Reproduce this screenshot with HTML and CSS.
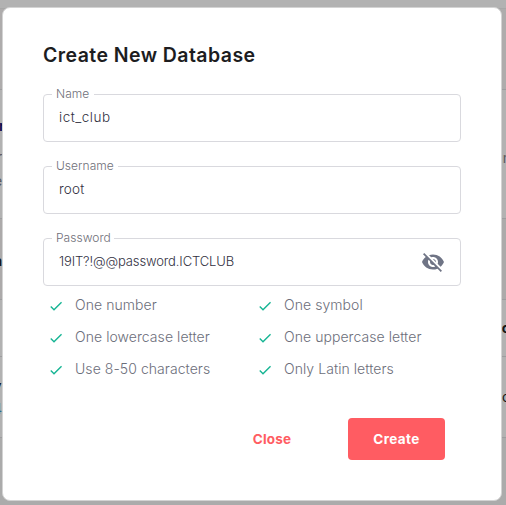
FILE: index.html
```
<!DOCTYPE html>
<html lang="en">
<head>
<meta charset="utf-8">
<title>Create New Database</title>
<link rel="stylesheet" href="styles.css">
</head>
<body>
<svg class="defs" width="0" height="0" aria-hidden="true">
  <symbol id="check" viewBox="0 0 24 24"><path d="M9 16.17 4.83 12l-1.42 1.41L9 19 21 7l-1.41-1.41z"/></symbol>
</svg>
<div class="page">
  <div class="row top"></div>
  <div class="row head"></div>
  <div class="row info"><div class="left"><b class="r1">r</b><span class="r1b">r</span><span class="r1c">e</span></div><span class="right r2">n</span></div>
  <div class="row title"><b class="r3">a</b></div>
  <div class="row cols"><b class="right r4">c</b></div>
  <div class="row item"><div class="left"><b class="r5">y</b><span class="r5b">4</span></div><span class="right r6">c</span></div>
  <div class="row foot"></div>
</div>
<main class="dialog">
  <h1>Create New Database</h1>
  <form>
    <div class="field"><label class="n1">Name</label><span class="value wide">ict_club</span></div>
    <div class="field"><label class="n2">Username</label><span class="value">root</span></div>
    <div class="field"><label class="n3">Password</label><span class="value tight">19IT?!@@password.ICTCLUB</span>
      <svg class="eye" viewBox="0 0 24 24"><path d="M12 7c2.76 0 5 2.24 5 5 0 .65-.13 1.26-.36 1.83l2.92 2.92c1.51-1.26 2.7-2.89 3.43-4.75-1.73-4.39-6-7.5-11-7.5-1.4 0-2.74.25-3.98.7l2.16 2.16C10.74 7.13 11.35 7 12 7zM2 4.27l2.28 2.28.46.46C3.08 8.3 1.78 10.02 1 12c1.73 4.39 6 7.5 11 7.5 1.55 0 3.03-.3 4.38-.84l.42.42L19.73 22 21 20.73 3.27 3 2 4.27zM7.53 9.8l1.55 1.55c-.05.21-.08.43-.08.65 0 1.66 1.34 3 3 3 .22 0 .44-.03.65-.08l1.55 1.55c-.67.33-1.41.53-2.2.53-2.76 0-5-2.24-5-5 0-.79.2-1.53.53-2.2zm4.31-.78 3.15 3.15.02-.16c0-1.66-1.34-3-3-3l-.17.01z"/></svg>
    </div>
    <ul class="rules">
      <li><svg><use href="#check"/></svg><span>One number</span></li>
      <li><svg><use href="#check"/></svg><span>One symbol</span></li>
      <li><svg><use href="#check"/></svg><span>One lowercase letter</span></li>
      <li><svg><use href="#check"/></svg><span>One uppercase letter</span></li>
      <li><svg><use href="#check"/></svg><span>Use 8-50 characters</span></li>
      <li><svg><use href="#check"/></svg><span>Only Latin letters</span></li>
    </ul>
    <div class="actions">
      <button type="button" class="close">Close</button>
      <button type="button" class="create">Create</button>
    </div>
  </form>
</main>
</body>
</html>
```
FILE: styles.css
```
* { box-sizing: border-box; }
body { margin: 0; width: 506px; height: 505px; overflow: hidden; position: relative; font-family: Inter, "Liberation Sans", sans-serif; }
.defs { position: absolute; }
.page { height: 505px; background: #b2b2b2; color: #161616; font-size: 14px; }
.row { display: flex; justify-content: space-between; overflow: hidden; border-bottom: 1px solid #9d9d9f; }
.row b, .row span { line-height: 16px; height: 16px; }
.left { display: flex; flex-direction: column; }
.right { margin-left: auto; }
.top { height: 9px; border-bottom-color: #a7a7a7; }
.head { height: 81px; background: #aeacac; }
.info { height: 129px; }
.title { height: 81px; background: #acaaaa; }
.cols { height: 57px; }
.item { height: 81px; }
.foot { height: 67px; background: #ababab; border: 0; }
.r1 { margin: 28px 0 0 -1px; color: #10104f; }
.r1b { margin: 15px 0 0 -3px; color: #58585e; }
.r1c { margin: 8px 0 0 -6px; color: #58585e; }
.r2 { margin-top: 60px; margin-right: -5px; color: #58585e; }
.r3 { margin: 34px 0 0 -6px; }
.r4 { margin-top: 20px; margin-right: -4px; }
.r5 { margin: 21px 0 0 -7px; }
.r5b { margin: 7px 0 0 -7px; color: #2d6a8c; }
.r6 { margin-top: 32px; margin-right: -4px; }
.dialog { position: absolute; left: 2px; top: 7px; width: 500px; height: 494px; padding: 33px 40px 0; background: #fff; border: 1px solid #d3d3d3; border-radius: 8px; }
h1 { margin: 0 0 24px; height: 29px; font-size: 19.5px; line-height: 29px; font-weight: 600; letter-spacing: .43px; color: #1d1d1f; white-space: nowrap; }
form { margin: 0; }
.field { display: flex; align-items: center; position: relative; width: 418px; height: 48px; margin-bottom: 24px; padding: 0 15px; border: 1px solid #d9d9de; border-radius: 4px; font-size: 13.5px; color: #32313f; white-space: nowrap; }
.field label { position: absolute; left: 8px; top: -10px; height: 16px; padding-left: 4px; background: #fff; font-size: 12px; line-height: 17px; font-weight: 350; letter-spacing: .04px; color: #6f6f79; }
.value { font-weight: 350; padding-bottom: 2px; letter-spacing: .2px; }
.wide { letter-spacing: .5px; }
.tight { font-size: 13px; letter-spacing: -.13px; }
.n1 { width: 42px; }
.n2 { width: 66px; }
.n3 { width: 62px; }
.eye { width: 24px; height: 24px; margin-left: auto; fill: #6f7485; }
.rules { display: grid; grid-template-columns: 209px 209px; grid-auto-rows: 32px; list-style: none; margin: -21px 0 0; padding: 0 0 0 5px; font-size: 14px; font-weight: 350; letter-spacing: .06px; color: #6c6e7a; white-space: nowrap; }
.rules li { display: flex; align-items: center; }
.rules li span { padding-bottom: 1px; }
.rules svg { width: 16px; height: 16px; margin: 1px 11px 0 0; fill: #14b493; }
.actions { display: flex; justify-content: flex-end; gap: 27px; margin-top: 33px; padding-right: 16px; }
button { height: 42px; padding: 0; border: 0; border-radius: 4px; font: 700 13.5px Inter, "Liberation Sans", sans-serif; white-space: nowrap; }
.close { width: 98px; background: transparent; color: #ff5c62; letter-spacing: .15px; }
.create { width: 97px; background: #ff5c62; color: #fff; letter-spacing: .4px; }
```
